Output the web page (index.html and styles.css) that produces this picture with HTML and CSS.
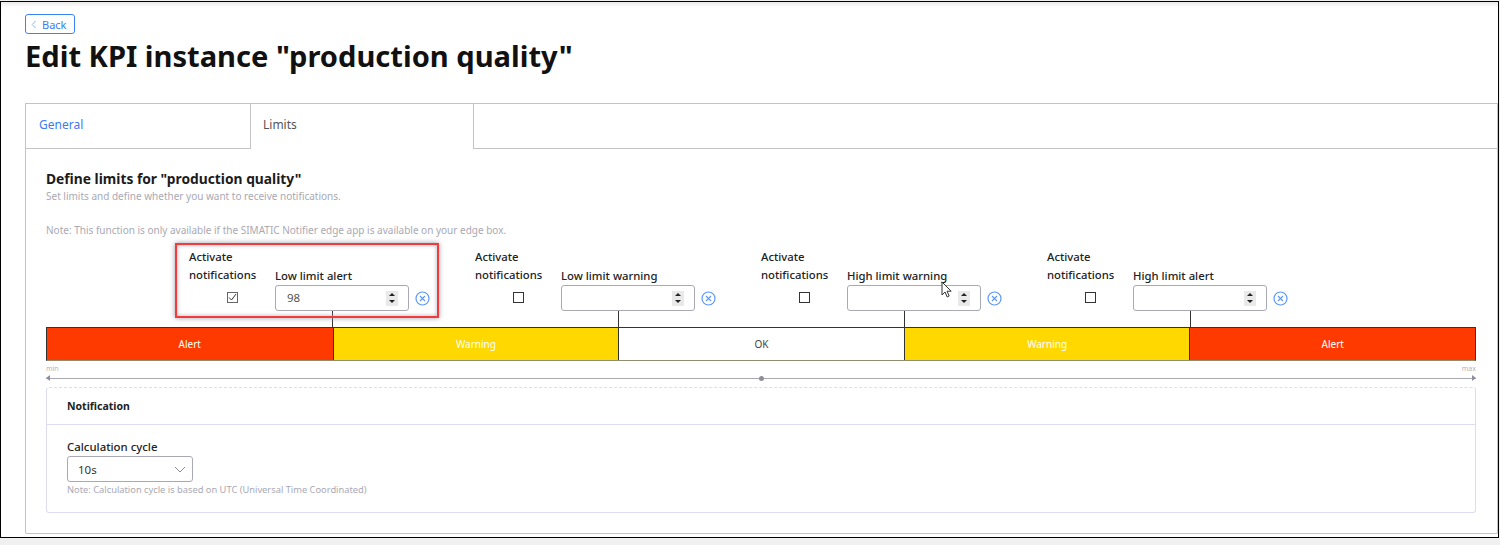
FILE: index.html
```html
<!DOCTYPE html>
<html lang="en">
<head>
  <meta charset="UTF-8">
  <title>Edit KPI instance</title>
  <link rel="stylesheet" href="styles.css">
</head>
<body>
  <div class="frame">
    <a class="back" href="#">
      <svg width="6" height="9" viewBox="0 0 6 9"><path d="M4.5 1 1.2 4.5 4.5 8" fill="none" stroke="#8fb4f5" stroke-width="1"/></svg>
      Back
    </a>
    <h1>Edit KPI instance "production quality"</h1>

    <div class="panel">
      <div class="tabs">
        <div class="tab tab-link">General</div>
        <div class="tab tab-active">Limits</div>
        <div class="tab-rest"></div>
      </div>

      <div class="panel-body">
        <h2>Define limits for "production quality"</h2>
        <p class="hint">Set limits and define whether you want to receive notifications.</p>
        <p class="hint note">Note: This function is only available if the SIMATIC Notifier edge app is available on your edge box.</p>

        <div class="limits">
          <div class="limit">
            <div class="limit-grid">
              <div class="activate">Activate</div>
              <div class="activate row2">notifications</div>
              <div class="field-label">Low limit alert</div>
              <div class="check-cell"><span class="check checked"><svg width="9" height="9" viewBox="0 0 9 9"><path d="M1 4.500 3.500 7 8 1" fill="none" stroke="#333" stroke-width="1"/></svg></span></div>
              <div class="input"><span class="value">98</span><span class="spin"><i class="up"></i><i class="down"></i></span></div>
              <svg class="clear" width="15" height="15" viewBox="0 0 15 15"><circle cx="7.5" cy="7.5" r="6.500" fill="none" stroke="#5b97fb" stroke-width="1.200"/><path d="M5 5l5 5M10 5l-5 5" stroke="#5b97fb" stroke-width="1.100"/></svg>
            </div>
            <div class="tick"></div>
          </div>
          <div class="limit">
            <div class="limit-grid">
              <div class="activate">Activate</div>
              <div class="activate row2">notifications</div>
              <div class="field-label">Low limit warning</div>
              <div class="check-cell"><span class="check"></span></div>
              <div class="input"><span class="value"></span><span class="spin"><i class="up"></i><i class="down"></i></span></div>
              <svg class="clear" width="15" height="15" viewBox="0 0 15 15"><circle cx="7.5" cy="7.5" r="6.500" fill="none" stroke="#5b97fb" stroke-width="1.200"/><path d="M5 5l5 5M10 5l-5 5" stroke="#5b97fb" stroke-width="1.100"/></svg>
            </div>
            <div class="tick"></div>
          </div>
          <div class="limit">
            <div class="limit-grid">
              <div class="activate">Activate</div>
              <div class="activate row2">notifications</div>
              <div class="field-label">High limit warning</div>
              <div class="check-cell"><span class="check"></span></div>
              <div class="input"><span class="value"></span><span class="spin"><i class="up"></i><i class="down"></i></span></div>
              <svg class="clear" width="15" height="15" viewBox="0 0 15 15"><circle cx="7.5" cy="7.5" r="6.500" fill="none" stroke="#5b97fb" stroke-width="1.200"/><path d="M5 5l5 5M10 5l-5 5" stroke="#5b97fb" stroke-width="1.100"/></svg>
            </div>
            <div class="tick"></div>
          </div>
          <div class="limit">
            <div class="limit-grid">
              <div class="activate">Activate</div>
              <div class="activate row2">notifications</div>
              <div class="field-label">High limit alert</div>
              <div class="check-cell"><span class="check"></span></div>
              <div class="input"><span class="value"></span><span class="spin"><i class="up"></i><i class="down"></i></span></div>
              <svg class="clear" width="15" height="15" viewBox="0 0 15 15"><circle cx="7.5" cy="7.5" r="6.500" fill="none" stroke="#5b97fb" stroke-width="1.200"/><path d="M5 5l5 5M10 5l-5 5" stroke="#5b97fb" stroke-width="1.100"/></svg>
            </div>
            <div class="tick"></div>
          </div>
        </div>

        <div class="bar">
          <div class="seg seg-alert">Alert</div>
          <div class="seg seg-warn">Warning</div>
          <div class="seg seg-ok">OK</div>
          <div class="seg seg-warn">Warning</div>
          <div class="seg seg-alert">Alert</div>
        </div>

        <div class="scale"><span>min</span><span>max</span></div>
        <div class="axis"><span class="axis-dot"></span></div>

        <div class="card">
          <div class="card-head">Notification</div>
          <div class="card-body">
            <div class="cycle-label">Calculation cycle</div>
            <div class="select">
              <span>10s</span>
              <svg width="12" height="7" viewBox="0 0 12 7"><path d="M1 1l5 5 5-5" fill="none" stroke="#8a8a9a" stroke-width="1"/></svg>
            </div>
            <p class="hint cycle-note">Note: Calculation cycle is based on UTC (Universal Time Coordinated)</p>
          </div>
        </div>
      </div>
    </div>

    <div class="highlight"></div>
    <svg class="cursor" width="12" height="17" viewBox="0 0 12 17"><path d="M1 1v13l3-3 2.200 5 2-1-2.200-4.800h4.200z" fill="#fff" stroke="#333" stroke-width="1"/></svg>
  </div>
</body>
</html>
```

FILE: styles.css
```css
* {
  box-sizing: border-box;
}
body {
  margin: 0;
  background: #f0f0f0;
  font-family: "Noto Sans", Arial, sans-serif;
  color: #1b1b1b;
}
.frame {
  position: relative;
  width: 1499px;
  height: 537px;
  margin-top: 1px;
  padding: 12px 0 0 24px;
  background: #fff;
  border: 1px solid #000;
  box-shadow: inset 0 5px 5px -3px #e6e6e6;
}
.back {
  display: flex;
  align-items: center;
  gap: 5px;
  width: 50px;
  height: 20px;
  padding-left: 5px;
  border: 1px solid #3b82f6;
  border-radius: 3px;
  color: #3b7cf0;
  font-size: 11px;
  text-decoration: none;
}
h1 {
  margin: 2px 0 27px;
  font-size: 29.100px;
  line-height: 40px;
  font-weight: 700;
  color: #111;
}
.panel {
  height: 431px;
  border: 1px solid #c4c4c4;
  border-top: none;
  border-radius: 2px;
}
.tabs {
  display: grid;
  grid-template-columns: 225px 224px 1fr;
  height: 46px;
  margin-left: -1px;
  margin-right: -1px;
}
.tab {
  padding: 0 13px;
  font-size: 12px;
  line-height: 42px;
  border-top: 1px solid #c4c4c4;
}
.tab-link {
  color: #3b7cf0;
  border-left: 1px solid #c4c4c4;
  border-bottom: 1px solid #c4c4c4;
}
.tab-active {
  color: #555;
  padding-left: 12px;
  border-left: 1px solid #c4c4c4;
  border-right: 1px solid #c4c4c4;
}
.tab-rest {
  border-top: 1px solid #c4c4c4;
  border-right: 1px solid #c4c4c4;
  border-bottom: 1px solid #c4c4c4;
}
.panel-body {
  padding: 20px 21px 0 20px;
}
h2 {
  margin: 0;
  font-size: 13.800px;
  line-height: 20px;
  font-weight: 700;
  color: #1b1b1b;
}
.hint {
  margin: 0;
  font-size: 10px;
  line-height: 14px;
  color: #a9a9b4;
}
.note {
  margin-top: 20px;
}
.limits {
  display: flex;
  margin: 11px 0 0 143px;
}
.limit {
  width: 286px;
}
.limit-grid {
  display: grid;
  grid-template-columns: 86px 134px 28px;
  grid-template-rows: 18px 18px 27px;
  align-items: center;
  font-size: 11.300px;
  font-weight: 500;
  color: #222;
}
.activate {
  grid-column: 1;
  grid-row: 1;
  line-height: 18px;
}
.activate.row2 {
  grid-row: 2;
}
.field-label {
  grid-column: 2;
  grid-row: 2;
}
.check-cell {
  grid-column: 1;
  grid-row: 3;
  display: flex;
  justify-content: center;
  padding-left: 1px;
}
.check {
  display: flex;
  align-items: center;
  justify-content: center;
  width: 11px;
  height: 11px;
  border: 1px solid #333;
}
.check.checked {
  border-color: #666;
}
.input {
  grid-column: 2;
  grid-row: 3;
  display: flex;
  align-items: center;
  justify-content: space-between;
  height: 26px;
  margin-top: 1px;
  padding: 0 10px 0 11px;
  border: 1px solid #a9a9b4;
  border-radius: 3px;
  font-size: 11.500px;
  font-weight: 400;
  color: #555;
}
.value {
  line-height: 21px;
  height: 23px;
}
.spin {
  display: flex;
  flex-direction: column;
  align-items: center;
  justify-content: space-around;
  width: 12px;
  height: 15px;
  background: #e9e9e9;
}
.spin i {
  width: 0;
  height: 0;
  border-left: 3px solid transparent;
  border-right: 3px solid transparent;
}
.spin .up {
  border-bottom: 3px solid #222;
}
.spin .down {
  border-top: 3px solid #222;
}
.clear {
  grid-column: 3;
  grid-row: 3;
  margin: 1px 0 0 6px;
}
.tick {
  width: 1px;
  height: 16px;
  margin-left: 143px;
  background: #333;
}
.bar {
  display: grid;
  grid-template-columns: repeat(5, 1fr);
  height: 34px;
  border: 1px solid #333;
  border-bottom-color: #8e8e70;
}
.seg {
  font-size: 10px;
  line-height: 32px;
  text-align: center;
  color: #fff;
}
.seg + .seg {
  border-left: 1px solid #333;
}
.seg-alert {
  background: #ff3a00;
}
.seg-warn {
  background: #ffd800;
}
.seg-ok {
  background: #fff;
  color: #444;
}
.scale {
  display: flex;
  justify-content: space-between;
  margin-top: 3px;
  font-size: 7px;
  line-height: 10px;
  color: #b4b4bc;
}
.axis {
  position: relative;
  height: 1px;
  margin-top: 4px;
  background: #a9a9b4;
}
.axis::before,
.axis::after {
  content: "";
  position: absolute;
  top: -3px;
  border-top: 3.500px solid transparent;
  border-bottom: 3.500px solid transparent;
}
.axis::before {
  left: 0;
  border-right: 4px solid #8e8e9a;
}
.axis::after {
  right: 0;
  border-left: 4px solid #8e8e9a;
}
.axis-dot {
  position: absolute;
  left: 50%;
  top: -2px;
  width: 5px;
  height: 5px;
  margin-left: -2px;
  border-radius: 50%;
  background: #8e8e9a;
}
.card {
  height: 126px;
  margin-top: 8px;
  border: 1px solid #dcdcf5;
  border-top-style: dashed;
  border-radius: 3px;
}
.card-head {
  height: 37px;
  padding-left: 20px;
  border-bottom: 1px solid #dcdcf5;
  font-size: 10.500px;
  line-height: 36px;
  font-weight: 700;
  color: #222;
}
.card-body {
  padding: 14px 0 0 20px;
}
.cycle-label {
  font-size: 11.400px;
  font-weight: 500;
  line-height: 16px;
  color: #222;
}
.select {
  display: flex;
  align-items: center;
  justify-content: space-between;
  width: 126px;
  height: 26px;
  margin-top: 1px;
  padding: 0 6px 0 10px;
  border: 1px solid #a9a9b4;
  border-radius: 3px;
  font-size: 11.500px;
  color: #333;
}
.hint.cycle-note {
  margin-top: 1px;
  font-size: 9.300px;
}
.highlight {
  position: absolute;
  left: 174px;
  top: 241px;
  width: 264px;
  height: 75px;
  border: 2px solid #f23b3b;
  box-shadow: 0 0 5px #9a9aaa, inset 0 0 4px #b0b0c0;
}
.cursor {
  position: absolute;
  left: 940px;
  top: 279px;
}
```
